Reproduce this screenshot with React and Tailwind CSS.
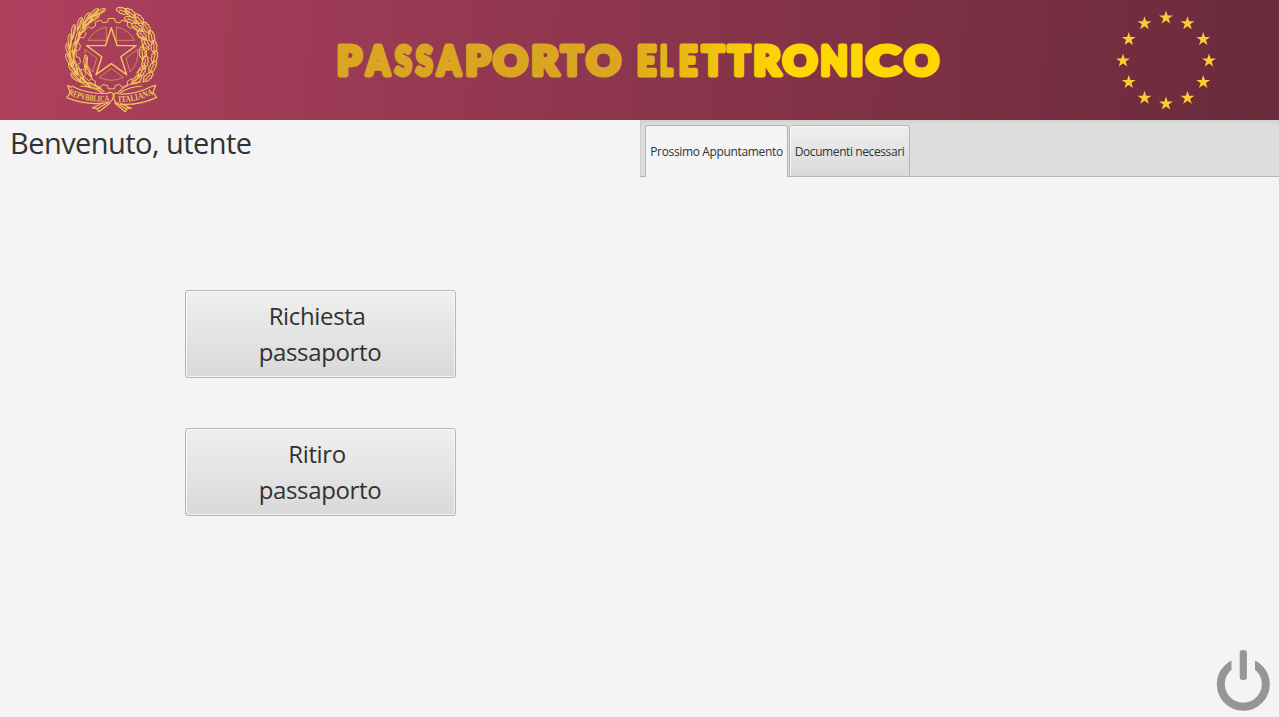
import React from "react";

const GOLD = "#f3c458";

// Each glyph of the title: letter, left edge, width.
const TITLE = [
  ["P", 337, 24.5], ["A", 366.5, 23], ["S", 395, 16.5], ["S", 416, 16.5], ["A", 437.5, 23],
  ["P", 465.5, 25], ["O", 493.5, 34], ["R", 531.5, 27], ["T", 561, 22], ["O", 586.5, 34],
  [" ", 622, 10],
  ["E", 637, 19], ["L", 660, 12.5], ["E", 679, 18], ["T", 702, 22], ["T", 728, 22],
  ["R", 753.5, 27], ["O", 783, 34], ["N", 820.5, 27], ["I", 850.5, 12.5], ["C", 866.5, 33.5], ["O", 904.5, 34],
];

function starPoints(cx, cy, outer, inner) {
  const pts = [];
  for (let i = 0; i < 10; i++) {
    const r = i % 2 === 0 ? outer : inner;
    const a = (-90 + i * 36) * (Math.PI / 180);
    pts.push((cx + r * Math.cos(a)).toFixed(2) + "," + (cy + r * Math.sin(a)).toFixed(2));
  }
  return pts.join(" ");
}

function gearPath(cx, cy, r, depth, teeth) {
  let d = "";
  for (let i = 0; i < teeth; i++) {
    const base = (i / teeth) * 360 - 90;
    [[-7, r], [-5, r + depth], [5, r + depth], [7, r]].forEach(([o, rad]) => {
      const a = (base + o) * (Math.PI / 180);
      d += (d ? "L" : "M") + (cx + rad * Math.cos(a)).toFixed(1) + " " + (cy + rad * Math.sin(a)).toFixed(1);
    });
  }
  return d + "Z";
}

const LAUREL = [
  [143, 33, -24], [124, 34, -36], [126, 50, -30], [100, 48, -52], [106, 62, -40],
  [78, 62, -64], [88, 82, -52], [58, 84, -74], [72, 106, -62], [46, 112, -84],
  [62, 134, -72], [39, 140, -96], [54, 160, -86], [39, 170, -106], [60, 190, -98],
  [48, 198, -118], [74, 214, -110], [56, 226, -130], [84, 240, -128], [94, 176, -80],
  [96, 204, -110], [108, 252, -146],
];

const OAK = [
  [204, 33, 18], [228, 40, 38], [228, 60, 20], [254, 58, 48], [248, 82, 32], [275, 84, 60],
  [262, 106, 48], [290, 112, 78], [272, 132, 62], [297, 142, 88], [262, 160, 85],
  [298, 172, 104], [270, 188, 100], [292, 202, 120], [260, 214, 115], [278, 232, 136], [244, 240, 140],
];

function Emblem() {
  return (
    <svg className="h-[120px] w-[115px]" viewBox="0 0 345 360" fill="none" stroke={GOLD} strokeLinejoin="round">
      <defs>
        <path id="ribbon-left" d="M40 283 Q104 312 168 303" />
        <path id="ribbon-right" d="M190 307 Q248 306 304 279" />
      </defs>
      <path d={gearPath(169, 161, 96, 10, 16)} strokeWidth="3" />
      <g strokeWidth="2.4" opacity="0.7">
        <path d="M99 121 A81 81 0 0 1 154 81 V121 Z" />
        <path d="M184 81 A81 81 0 0 1 239 121 H184 Z" />
        <path d="M90 148 A81 81 0 0 0 113 216 L125 174 Z" />
        <path d="M248 148 A81 81 0 0 1 225 216 L213 174 Z" />
        <path d="M133 232 A81 81 0 0 0 205 232 L169 205 Z" />
      </g>
      <polygon points={starPoints(169, 161, 78, 30)} strokeWidth="4.4" />
      <g strokeWidth="3">
        {LAUREL.map(([x, y, a], i) => (
          <g key={i} transform={`translate(${x} ${y}) rotate(${a})`}>
            <path d="M-34 4 C-14 -7 2 -9 9 -4 C12 1 4 7 -34 4 Z M-28 3 L5 -1" />
          </g>
        ))}
      </g>
      <g strokeWidth="3.4">
        {OAK.map(([x, y, a], i) => (
          <g key={i} transform={`translate(${x} ${y}) rotate(${a})`}>
            <path d="M-21 0 Q-17 -9 -10 -6 Q-6 -13 0 -7 Q7 -12 10 -5 L20 0 L10 6 Q6 12 0 7 Q-6 12 -10 6 Q-17 8 -21 0 M-12 0 H13" />
          </g>
        ))}
      </g>
      <g strokeWidth="3.6">
        <path d="M80 246 Q120 248 148 276 M76 258 Q116 260 142 278 M258 246 Q218 248 190 276 M262 258 Q222 260 196 278" />
        <path d="M50 262 L38 257 L46 279 L35 293 Q104 320 164 306 Q178 299 174 280 Q165 274 157 280 Q100 284 50 258" />
        <path d="M288 260 L302 256 L294 277 L305 292 Q250 318 190 312 Q174 305 177 284 Q185 274 193 282 Q240 284 288 260" />
        <path d="M166 308 L132 335 L125 325 L112 324 L144 308 M178 308 L211 335 L216 324 L229 325 L196 310 M158 308 L124 328 M184 308 L217 329" />
      </g>
      <g fill={GOLD} stroke="none" className="font-['Liberation_Serif',serif] text-[27px] font-bold">
        <text><textPath href="#ribbon-left" textLength="126" lengthAdjust="spacingAndGlyphs">REPVBBLICA</textPath></text>
        <text><textPath href="#ribbon-right" textLength="110" lengthAdjust="spacingAndGlyphs">ITALIANA</textPath></text>
      </g>
    </svg>
  );
}

function EuStars() {
  return (
    <svg className="h-[120px] w-[120px]" viewBox="0 0 120 120" fill="#ffcc33">
      {Array.from({ length: 12 }, (_, i) => {
        const a = i * 30 * (Math.PI / 180);
        return <polygon key={i} points={starPoints(60 + 43 * Math.sin(a), 60.7 - 43 * Math.cos(a), 7.3, 2.8)} />;
      })}
    </svg>
  );
}

function Title() {
  return (
    <svg className="h-[120px] w-[620px]" viewBox="330 0 620 120">
      <defs>
        <linearGradient id="title-gold" gradientUnits="userSpaceOnUse" x1="610" y1="0" x2="790" y2="0">
          <stop offset="0" stopColor="#daa520" />
          <stop offset="1" stopColor="#ffd700" />
        </linearGradient>
      </defs>
      <text
        y="75.2"
        fill="url(#title-gold)"
        stroke="url(#title-gold)"
        strokeWidth="5"
        strokeLinejoin="round"
        className="font-['Lato',sans-serif] text-[40px] font-black"
      >
        {TITLE.map(([ch, x, w], i) => (
          <tspan key={i} x={x} textLength={w} lengthAdjust="spacingAndGlyphs">{ch}</tspan>
        ))}
      </text>
    </svg>
  );
}

function BigButton({ first, second }) {
  return (
    <button className="flex h-[88px] w-[271px] flex-col items-center justify-center rounded-[3px] border border-[#b5b5b5] bg-linear-to-b from-[#efefef] to-[#d9d9d9] text-[24px] leading-[36px] tracking-[-0.35px] whitespace-pre shadow-[inset_0_0_0_1px_rgba(255,255,255,0.65)]">
      <span>{first + " "}</span>
      <span>{second}</span>
    </button>
  );
}

export default function App() {
  return (
    <div className="flex h-[717px] w-[1279px] flex-col overflow-hidden bg-[#f4f4f4] font-['Open_Sans','Noto_Sans',sans-serif] text-[#323232]">
      <header className="flex h-[120px] shrink-0 bg-[linear-gradient(95deg,#ae405e,#692b3b)]">
        <div className="w-[330px] pl-[55px]"><Emblem /></div>
        <Title />
        <div className="pl-[156px]"><EuStars /></div>
      </header>
      <main className="flex min-h-0 flex-1">
        <section className="flex w-[640px] flex-col">
          <h1 className="h-[170px] pt-[3px] pl-[10px] text-[29px] leading-[40px] tracking-[-0.55px] whitespace-nowrap">Benvenuto, utente</h1>
          <div className="flex flex-col items-center gap-[50px]">
            <BigButton first="Richiesta" second="passaporto" />
            <BigButton first="Ritiro" second="passaporto" />
          </div>
        </section>
        <section className="flex flex-1 flex-col">
          <div className="flex h-[57px] items-end bg-[linear-gradient(to_bottom,#d2d2d2,#dddddd_5px,#dddddd)] pl-[5px] shadow-[inset_0_-1px_0_#b5b5b5,inset_1px_0_0_#cccccc]">
            <div className="flex h-[52px] w-[143px] items-center justify-center rounded-t-[3px] border border-b-0 border-[#b5b5b5] bg-[#f4f4f4] text-[12px] tracking-[-0.35px] whitespace-nowrap">Prossimo Appuntamento</div>
            <div className="ml-px flex h-[52px] w-[121px] items-center justify-center rounded-t-[3px] border border-[#b5b5b5] bg-linear-to-b from-[#efefef] to-[#d9d9d9] pt-px text-[12px] tracking-[-0.4px] whitespace-nowrap shadow-[inset_1px_1px_0_rgba(255,255,255,0.6)]">Documenti necessari</div>
          </div>
          <div className="flex flex-1 items-end justify-end pr-[9px] pb-[6px]">
            <button aria-label="Esci">
              <svg className="block h-[61px] w-[54px]" viewBox="0 0 54 61" fill="none" stroke="#969696">
                <clipPath id="power-gap">
                  <path d="M0 0 H15.5 V40 H39 V0 H54 V61 H0 Z" />
                </clipPath>
                <circle cx="27.3" cy="34.2" r="22.5" strokeWidth="8" clipPath="url(#power-gap)" />
                <rect x="23.7" y="0" width="7.2" height="30" rx="3" fill="#969696" stroke="none" />
              </svg>
            </button>
          </div>
        </section>
      </main>
    </div>
  );
}
